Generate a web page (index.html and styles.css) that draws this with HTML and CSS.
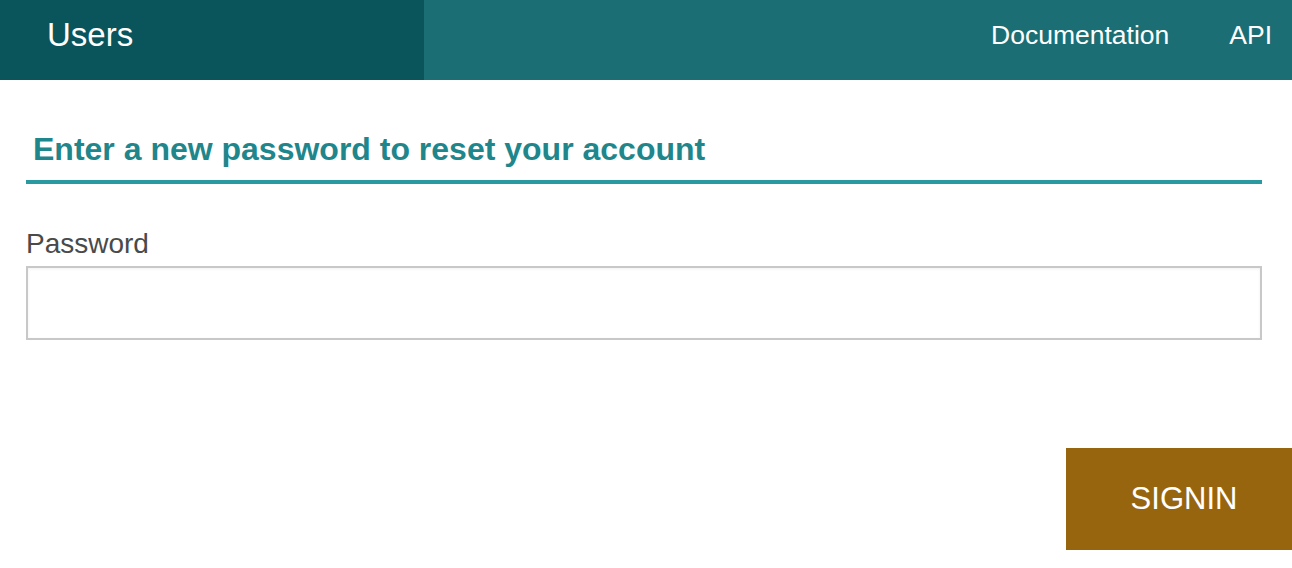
FILE: index.html
```html
<!DOCTYPE html>
<html>
<head>
<meta charset="utf-8">
<link rel="stylesheet" href="styles.css">
</head>
<body>
<header class="topbar">
  <div class="brand">Users</div>
  <nav class="nav">
    <a class="nav-link" href="#">Documentation</a>
    <a class="nav-link" href="#">API</a>
  </nav>
</header>
<main class="content">
  <h1 class="title">Enter a new password to reset your account</h1>
  <label class="label" for="pw">Password</label>
  <input class="input" id="pw" type="password">
</main>
<div class="actions">
  <button class="btn">SIGNIN</button>
</div>
</body>
</html>
```

FILE: styles.css
```css
* { box-sizing: border-box; }
html, body { margin: 0; padding: 0; background: #fff; }
body { font-family: "Liberation Sans", Arial, Helvetica, sans-serif; }

.topbar {
  display: flex;
  height: 80px;
  background: #1b6e74;
  color: #fff;
}
.brand {
  width: 424px;
  background: #0a545b;
  padding-left: 47px;
  font-size: 33px;
  line-height: 70px;
}
.nav {
  flex: 1;
  display: flex;
  justify-content: flex-end;
  gap: 60px;
  padding-right: 20px;
}
.nav-link {
  color: #fff;
  text-decoration: none;
  font-size: 26.5px;
  line-height: 70px;
}

.content {
  padding: 0 30px 0 26px;
  display: flex;
  flex-direction: column;
}
.title {
  margin: 50px 0 0;
  padding: 0 0 12px 7px;
  font-size: 32px;
  font-weight: bold;
  color: #1f868c;
  line-height: 38px;
  border-bottom: 4px solid #2a9aa0;
}
.label {
  margin-top: 44px;
  font-size: 28px;
  line-height: 32px;
  color: #4a4a4a;
}
.input {
  margin-top: 6px;
  height: 74px;
  border: 2px solid #c8c8c8;
  box-shadow: inset 0 1px 3px rgba(0,0,0,0.06);
  outline: none;
  background: #fff;
}

.actions {
  display: flex;
  justify-content: flex-end;
  margin-top: 108px;
}
.btn {
  width: 226px;
  height: 102px;
  border: 0;
  background: #98650f;
  color: #fff;
  font-family: "Liberation Sans", Arial, Helvetica, sans-serif;
  font-size: 31px;
  padding: 0 0 0 10px;
}
```
